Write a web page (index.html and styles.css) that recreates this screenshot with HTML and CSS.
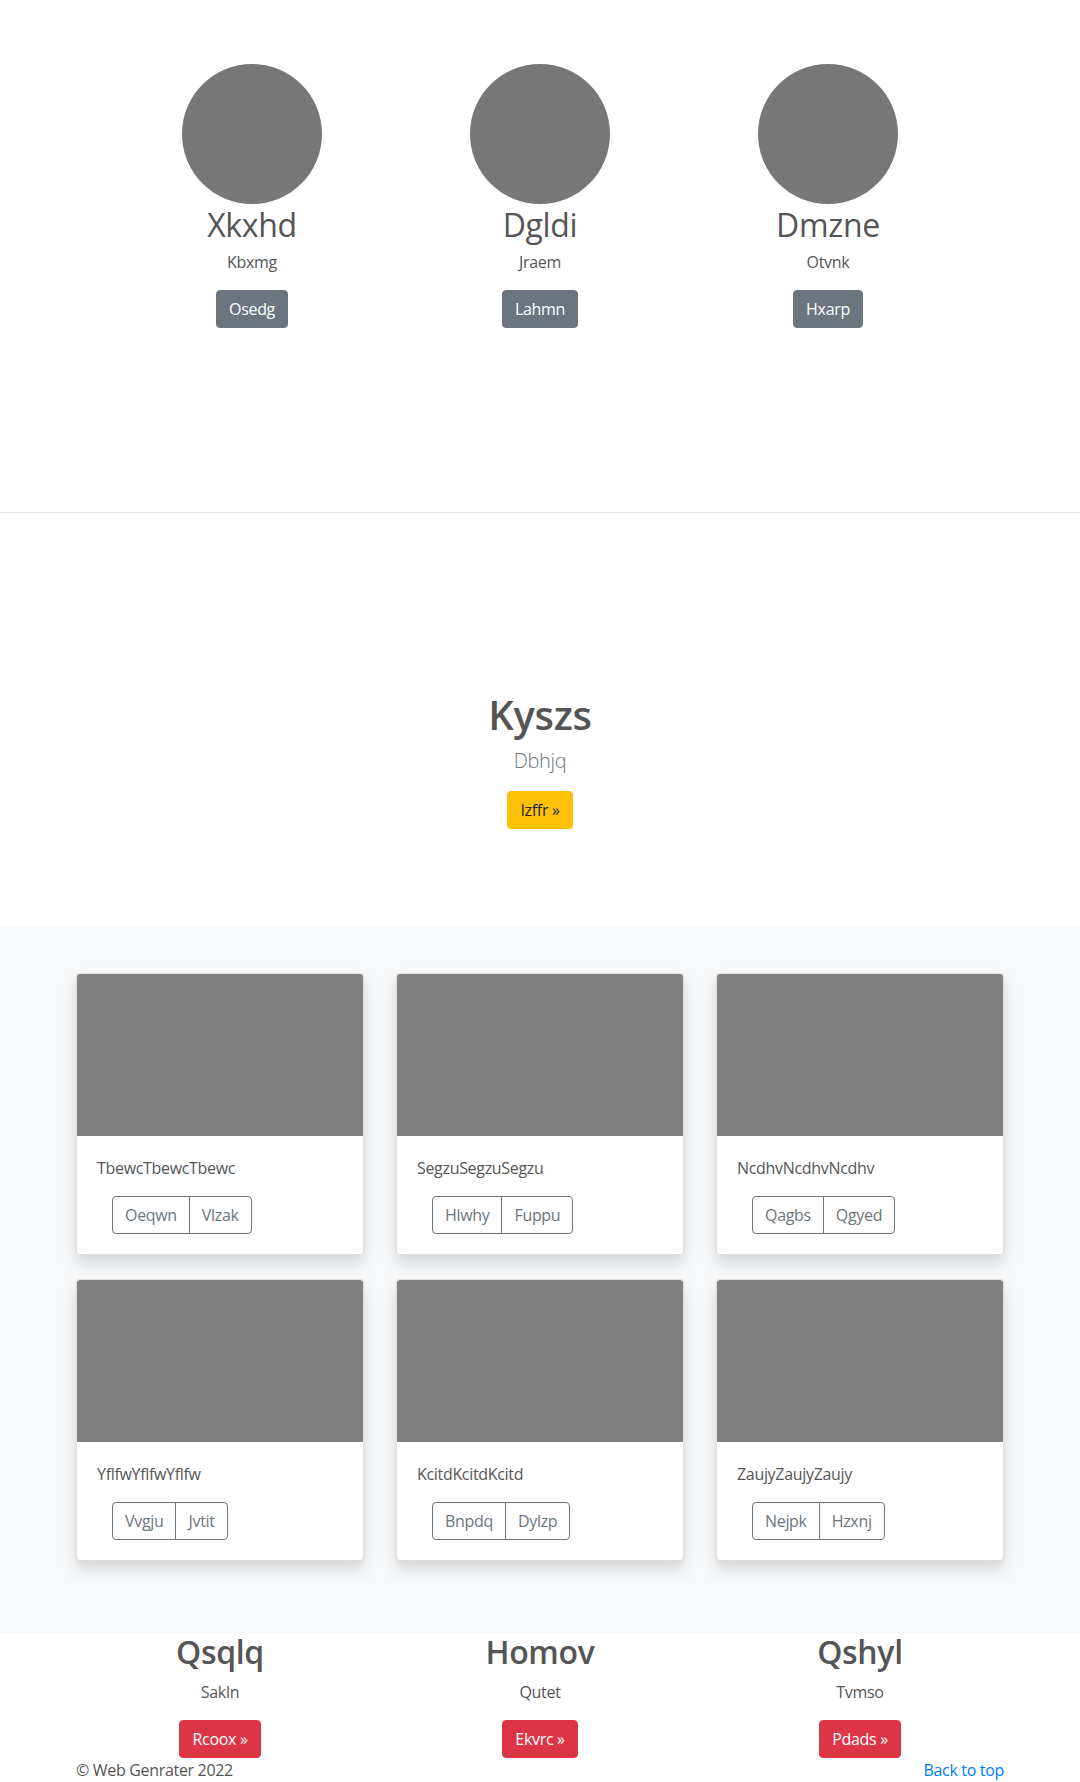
FILE: index.html
```html
<!DOCTYPE html>
<html lang="en">
<head>
<meta charset="utf-8">
<title>Web Genrater</title>
<link rel="stylesheet" href="styles.css">
</head>
<body>
<section class="team">
  <div class="team-grid">
    <div class="member">
      <svg class="avatar" width="140" height="140" viewBox="0 0 140 140"><circle cx="70" cy="70" r="70" fill="#777"/></svg>
      <h2 class="member-name">Xkxhd</h2>
      <p class="member-role">Kbxmg</p>
      <a class="btn btn-secondary" href="#">Osedg</a>
    </div>
    <div class="member">
      <svg class="avatar" width="140" height="140" viewBox="0 0 140 140"><circle cx="70" cy="70" r="70" fill="#777"/></svg>
      <h2 class="member-name">Dgldi</h2>
      <p class="member-role">Jraem</p>
      <a class="btn btn-secondary" href="#">Lahmn</a>
    </div>
    <div class="member">
      <svg class="avatar" width="140" height="140" viewBox="0 0 140 140"><circle cx="70" cy="70" r="70" fill="#777"/></svg>
      <h2 class="member-name">Dmzne</h2>
      <p class="member-role">Otvnk</p>
      <a class="btn btn-secondary" href="#">Hxarp</a>
    </div>
  </div>
</section>

<section class="hero">
  <h1 class="hero-title">Kyszs</h1>
  <p class="lead">Dbhjq</p>
  <a class="btn btn-warning" href="#">Izffr »</a>
</section>

<section class="album">
  <div class="card-grid">
    <div class="card">
      <div class="card-img"></div>
      <div class="card-body">
        <p class="card-text">TbewcTbewcTbewc</p>
        <div class="btn-group"><a class="btn btn-outline" href="#">Oeqwn</a><a class="btn btn-outline" href="#">Vlzak</a></div>
      </div>
    </div>
    <div class="card">
      <div class="card-img"></div>
      <div class="card-body">
        <p class="card-text">SegzuSegzuSegzu</p>
        <div class="btn-group"><a class="btn btn-outline" href="#">Hlwhy</a><a class="btn btn-outline" href="#">Fuppu</a></div>
      </div>
    </div>
    <div class="card">
      <div class="card-img"></div>
      <div class="card-body">
        <p class="card-text">NcdhvNcdhvNcdhv</p>
        <div class="btn-group"><a class="btn btn-outline" href="#">Qagbs</a><a class="btn btn-outline" href="#">Qgyed</a></div>
      </div>
    </div>
    <div class="card">
      <div class="card-img"></div>
      <div class="card-body">
        <p class="card-text">YflfwYflfwYflfw</p>
        <div class="btn-group"><a class="btn btn-outline" href="#">Vvgju</a><a class="btn btn-outline" href="#">Jvtit</a></div>
      </div>
    </div>
    <div class="card">
      <div class="card-img"></div>
      <div class="card-body">
        <p class="card-text">KcitdKcitdKcitd</p>
        <div class="btn-group"><a class="btn btn-outline" href="#">Bnpdq</a><a class="btn btn-outline" href="#">Dylzp</a></div>
      </div>
    </div>
    <div class="card">
      <div class="card-img"></div>
      <div class="card-body">
        <p class="card-text">ZaujyZaujyZaujy</p>
        <div class="btn-group"><a class="btn btn-outline" href="#">Nejpk</a><a class="btn btn-outline" href="#">Hzxnj</a></div>
      </div>
    </div>
  </div>
</section>

<section class="features">
  <div class="feature">
    <h2 class="feature-title">Qsqlq</h2>
    <p class="feature-text">Sakln</p>
    <a class="btn btn-danger" href="#">Rcoox »</a>
  </div>
  <div class="feature">
    <h2 class="feature-title">Homov</h2>
    <p class="feature-text">Qutet</p>
    <a class="btn btn-danger" href="#">Ekvrc »</a>
  </div>
  <div class="feature">
    <h2 class="feature-title">Qshyl</h2>
    <p class="feature-text">Tvmso</p>
    <a class="btn btn-danger" href="#">Pdads »</a>
  </div>
</section>

<footer class="footer">
  <span class="copy">© Web Genrater 2022</span>
  <a class="top-link" href="#">Back to top</a>
</footer>
</body>
</html>
```
FILE: styles.css
```css
* { box-sizing: border-box; }

body {
  margin: 0;
  font-family: "Open Sans", "Noto Sans", sans-serif;
  font-size: 16px;
  line-height: 1.5;
  letter-spacing: -0.02em;
  color: #555;
  background: #fff;
}

p { margin: 0; }
h1, h2 { margin: 0; }

.btn {
  display: inline-block;
  padding: 6px 12px;
  font-size: 16px;
  line-height: 24px;
  border: 1px solid transparent;
  border-radius: 4px;
  text-decoration: none;
  vertical-align: top;
}
.btn-secondary { background: #6c757d; border-color: #6c757d; color: #fff; }
.btn-warning { background: #ffc107; border-color: #ffc107; color: #212529; }
.btn-danger { background: #dc3545; border-color: #dc3545; color: #fff; }
.btn-outline { background: #fff; border-color: #6c757d; color: #6c757d; }

/* Team */
.team {
  padding: 64px 0 184px;
  border-bottom: 1px solid #e5e5e5;
}
.team-grid {
  width: 864px;
  margin: 0 auto;
  display: grid;
  grid-template-columns: repeat(3, 1fr);
}
.member {
  display: flex;
  flex-direction: column;
  align-items: center;
  text-align: center;
}
.avatar { display: block; }
.member-name {
  font-size: 32px;
  font-weight: 400;
  line-height: 1.2;
  margin-top: 2px;
  margin-bottom: 6px;
}
.member-role { margin-bottom: 16px; }

/* Hero */
.hero {
  padding: 178px 0 96px;
  display: flex;
  flex-direction: column;
  align-items: center;
  text-align: center;
}
.hero-title {
  font-size: 40px;
  font-weight: 600;
  line-height: 1.2;
  margin-bottom: 7px;
}
.lead {
  font-size: 20px;
  font-weight: 300;
  line-height: 1.5;
  color: #6c757d;
  margin-bottom: 15px;
}

/* Album */
.album {
  background: #f8f9fa;
  padding: 48px 0;
}
.card-grid {
  width: 928px;
  margin: 0 auto;
  display: grid;
  grid-template-columns: repeat(3, 1fr);
  column-gap: 32px;
  row-gap: 24px;
  padding-bottom: 24px;
}
.card {
  background: #fff;
  border: 1px solid rgba(0,0,0,.125);
  border-radius: 4px;
  box-shadow: 0 8px 16px rgba(0,0,0,.15);
  overflow: hidden;
}
.card-img {
  height: 162px;
  background: #808080;
}
.card-body { padding: 20px; }
.card-text { margin-bottom: 16px; }
.btn-group {
  display: inline-flex;
  margin-left: 15px;
}
.btn-group .btn:first-child { border-top-right-radius: 0; border-bottom-right-radius: 0; }
.btn-group .btn:last-child { border-top-left-radius: 0; border-bottom-left-radius: 0; margin-left: -1px; }

/* Features */
.features {
  width: 960px;
  margin: 0 auto;
  display: grid;
  grid-template-columns: repeat(3, 1fr);
}
.feature {
  display: flex;
  flex-direction: column;
  align-items: center;
  text-align: center;
}
.feature-title {
  font-size: 32px;
  font-weight: 600;
  line-height: 1.2;
  margin-bottom: 8px;
}
.feature-text { margin-bottom: 16px; }

/* Footer */
.footer {
  width: 928px;
  margin: 0 auto;
  display: flex;
  justify-content: space-between;
  line-height: 24px;
}
.top-link { color: #007bff; text-decoration: none; }
```
